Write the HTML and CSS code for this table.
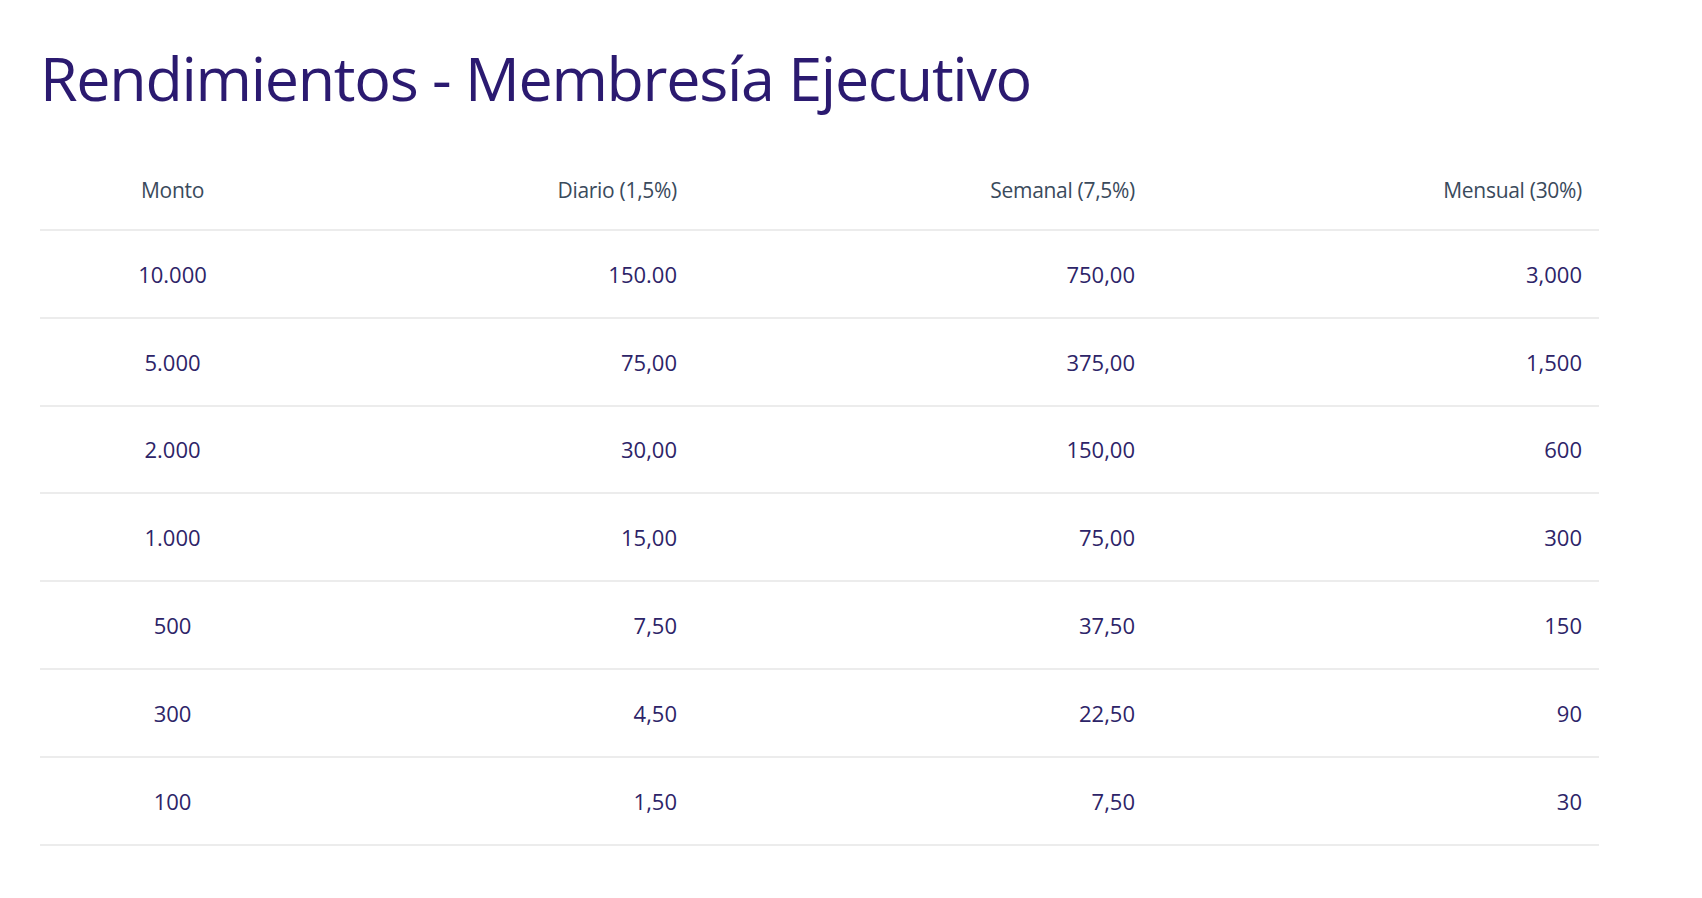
FILE: index.html
```html
<!DOCTYPE html>
<html lang="es">
<head>
<meta charset="utf-8">
<title>Rendimientos - Membresía Ejecutivo</title>
<link rel="stylesheet" href="styles.css">
</head>
<body>
<main class="page">
  <h1 class="title">Rendimientos - Membresía Ejecutivo</h1>
  <table class="returns">
    <colgroup>
      <col class="c1"><col class="c2"><col class="c3"><col class="c4">
    </colgroup>
    <thead>
      <tr><th class="center">Monto</th><th>Diario (1,5%)</th><th>Semanal (7,5%)</th><th>Mensual (30%)</th></tr>
    </thead>
    <tbody>
      <tr><td class="center">10.000</td><td>150.00</td><td>750,00</td><td>3,000</td></tr>
      <tr><td class="center">5.000</td><td>75,00</td><td>375,00</td><td>1,500</td></tr>
      <tr><td class="center">2.000</td><td>30,00</td><td>150,00</td><td>600</td></tr>
      <tr><td class="center">1.000</td><td>15,00</td><td>75,00</td><td>300</td></tr>
      <tr><td class="center">500</td><td>7,50</td><td>37,50</td><td>150</td></tr>
      <tr><td class="center">300</td><td>4,50</td><td>22,50</td><td>90</td></tr>
      <tr><td class="center">100</td><td>1,50</td><td>7,50</td><td>30</td></tr>
    </tbody>
  </table>
</main>
</body>
</html>
```

FILE: styles.css
```css
html, body {
  margin: 0;
  padding: 0;
  background: #ffffff;
}

body {
  font-family: "Open Sans", "Noto Sans", "Liberation Sans", sans-serif;
}

.page {
  padding: 36px 0 0 40px;
  width: 1559px;
}

.title {
  margin: 0;
  font-weight: 400;
  font-size: 61px;
  line-height: 84px;
  color: #2b1a70;
  letter-spacing: -1.3px;
}

.returns {
  margin-top: 24px;
  width: 1559px;
  border-collapse: collapse;
  table-layout: fixed;
}

.c1 { width: 265px; }
.c2 { width: 389px; }
.c3 { width: 458px; }
.c4 { width: 447px; }

.returns th,
.returns td {
  height: 86px;
  padding: 0 17px 0 0;
  text-align: right;
  vertical-align: middle;
  border-bottom: 2px solid #ececec;
  font-weight: 400;
}

.returns th {
  height: 79px;
  padding-top: 6px;
  font-size: 21px;
  color: #3a4a5c;
  letter-spacing: -0.3px;
}

.returns td {
  height: 85.8px;
  font-size: 22px;
  color: #2d2468;
}

.returns .center {
  text-align: center;
  padding-right: 0;
}
```
